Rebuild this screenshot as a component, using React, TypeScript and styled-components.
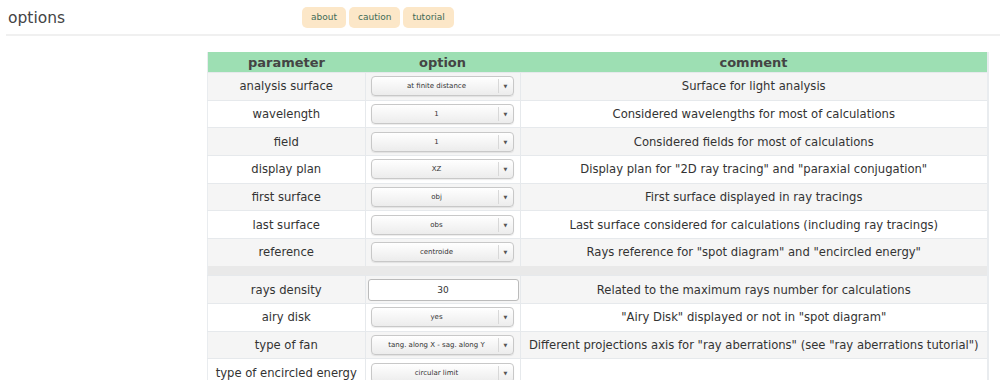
import React from "react";
import styled, { createGlobalStyle } from "styled-components";

const GlobalStyle = createGlobalStyle`
  body {
    margin: 0;
    background: #fff;
    font-family: "DejaVu Sans", sans-serif;
    color: #333;
  }
`;

const TopBar = styled.div`
  display: flex;
  align-items: center;
  height: 34px;
  margin-left: 6px;
  border-bottom: 2px solid #f0f0f0;
`;

const Title = styled.h1`
  margin: 2px 0 0 2px;
  width: 294px;
  font-size: 15.5px;
  font-weight: normal;
  color: #444;
`;

const NavButtons = styled.div`
  display: flex;
  gap: 3px;
`;

const NavButton = styled.button`
  height: 21px;
  padding: 0 9px;
  border: none;
  border-radius: 5px;
  background: #fce7c8;
  color: #3f6b56;
  font-family: "DejaVu Sans", sans-serif;
  font-size: 9px;
`;

const TableWrap = styled.div`
  padding: 16px 11px 0 207px;
`;

const Table = styled.table`
  width: 782px;
  table-layout: fixed;
  border-collapse: collapse;
  border-right: 2px solid #e9ecef;
  border-left: 1px solid #e9ecef;
  font-size: 11.6px;
`;

const HeadCell = styled.th<{ $w?: number }>`
  background: #9ddfb3;
  height: 20px;
  padding: 0;
  color: #444;
  font-size: 13px;
  font-weight: bold;
  width: ${(p) => (p.$w ? `${p.$w}px` : "auto")};
`;

const Row = styled.tr<{ $shade: boolean }>`
  background: ${(p) => (p.$shade ? "#f5f5f5" : "#fff")};
  border-top: 1px solid #e6e9ec;
`;

const Spacer = styled.tr`
  background: #e9e9e9;
  height: 10px;
`;

const Cell = styled.td`
  height: 26.7px;
  padding: 0;
  text-align: center;
  white-space: nowrap;
  & + & {
    border-left: 1px solid #e6e9ec;
  }
`;

const Select = styled.div`
  box-sizing: border-box;
  width: 143px;
  height: 20px;
  margin: 0 auto 0 5px;
  display: flex;
  align-items: center;
  border: 1px solid #c8c8c8;
  border-radius: 4px;
  background: linear-gradient(#ffffff, #ececec);
  box-shadow: 0 1px 1px rgba(0, 0, 0, 0.08);
  font-size: 7px;
  color: #333;
`;

const SelectText = styled.span`
  flex: 1;
  text-align: center;
  padding-left: 4px;
`;

const Caret = styled.span`
  width: 14px;
  height: 14px;
  border-left: 1px solid #d8d8d8;
  display: flex;
  align-items: center;
  justify-content: center;
  font-size: 5px;
  color: #555;
`;

const NumberInput = styled.div`
  box-sizing: border-box;
  width: 151px;
  height: 22px;
  margin: 0 auto 0 2px;
  display: flex;
  align-items: center;
  justify-content: center;
  border: 1px solid #bbb;
  border-radius: 3px;
  background: #fff;
  font-size: 9px;
  color: #333;
`;

type Item = { name: string; value: string; comment: string; input?: boolean };

const first: Item[] = [
  { name: "analysis surface", value: "at finite distance", comment: "Surface for light analysis" },
  { name: "wavelength", value: "1", comment: "Considered wavelengths for most of calculations" },
  { name: "field", value: "1", comment: "Considered fields for most of calculations" },
  { name: "display plan", value: "XZ", comment: 'Display plan for "2D ray tracing" and "paraxial conjugation"' },
  { name: "first surface", value: "obj", comment: "First surface displayed in ray tracings" },
  { name: "last surface", value: "obs", comment: "Last surface considered for calculations (including ray tracings)" },
  { name: "reference", value: "centroide", comment: 'Rays reference for "spot diagram" and "encircled energy"' },
];

const second: Item[] = [
  { name: "rays density", value: "30", comment: "Related to the maximum rays number for calculations", input: true },
  { name: "airy disk", value: "yes", comment: '"Airy Disk" displayed or not in "spot diagram"' },
  { name: "type of fan", value: "tang. along X - sag. along Y", comment: 'Different projections axis for "ray aberrations" (see "ray aberrations tutorial")' },
  { name: "type of encircled energy", value: "circular limit", comment: "" },
];

const OptionRow = ({ item, shade }: { item: Item; shade: boolean }) => (
  <Row $shade={shade}>
    <Cell>{item.name}</Cell>
    <Cell>
      {item.input ? (
        <NumberInput>{item.value}</NumberInput>
      ) : (
        <Select>
          <SelectText>{item.value}</SelectText>
          <Caret>▼</Caret>
        </Select>
      )}
    </Cell>
    <Cell>{item.comment}</Cell>
  </Row>
);

export default function App() {
  return (
    <>
      <GlobalStyle />
      <TopBar>
        <Title>options</Title>
        <NavButtons>
          <NavButton>about</NavButton>
          <NavButton>caution</NavButton>
          <NavButton>tutorial</NavButton>
        </NavButtons>
      </TopBar>
      <TableWrap>
        <Table>
          <thead>
            <tr>
              <HeadCell $w={157}>parameter</HeadCell>
              <HeadCell $w={155}>option</HeadCell>
              <HeadCell>comment</HeadCell>
            </tr>
          </thead>
          <tbody>
            {first.map((it, i) => (
              <OptionRow key={it.name} item={it} shade={i % 2 === 0} />
            ))}
            <Spacer>
              <td colSpan={3} />
            </Spacer>
            {second.map((it, i) => (
              <OptionRow key={it.name} item={it} shade={i % 2 === 0} />
            ))}
          </tbody>
        </Table>
      </TableWrap>
    </>
  );
}
